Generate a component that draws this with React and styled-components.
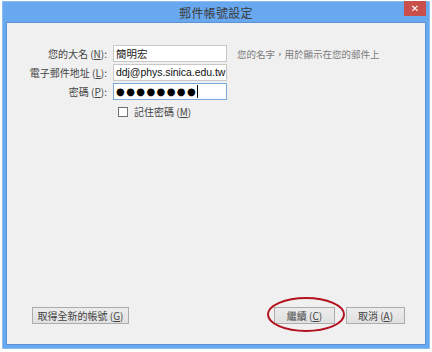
import React from "react";
import styled, { createGlobalStyle } from "styled-components";

const Global = createGlobalStyle`
  html, body {
    margin: 0;
    padding: 0;
    background: #ffffff;
  }
  body {
    font-family: "Noto Sans CJK TC", "Noto Sans", sans-serif;
  }
`;

const Page = styled.div`
  width: 432px;
  height: 352px;
  padding: 1px 2px 0 2px;
  box-sizing: border-box;
`;

const Window = styled.div`
  width: 428px;
  height: 348px;
  box-sizing: border-box;
  background: #68a8ef;
  border: 1px solid #8cbcf2;
  padding: 0 3px 3px 3px;
  display: flex;
  flex-direction: column;
`;

const TitleBar = styled.div`
  height: 20px;
  display: grid;
  grid-template-columns: 1fr auto 1fr;
  align-items: start;
`;

const Title = styled.div`
  grid-column: 2;
  font-size: 12px;
  line-height: 21px;
  color: #3a3a3a;
  letter-spacing: 0.3px;
`;

const Close = styled.div`
  grid-column: 3;
  justify-self: end;
  margin-top: -1px;
  width: 22px;
  height: 15px;
  background: #c9504a;
  color: #ffffff;
  font-family: "DejaVu Sans", sans-serif;
  font-size: 10px;
  font-weight: bold;
  line-height: 15px;
  text-align: center;
`;

const Client = styled.div`
  flex: 1;
  background: #f0f0f0;
  border: 1px solid #5c93d6;
  padding: 22px 0 20px 0;
  display: flex;
  flex-direction: column;
  justify-content: space-between;
`;

const Form = styled.div`
  display: grid;
  grid-template-columns: 100px 114px auto;
  column-gap: 6px;
  row-gap: 2px;
  align-items: center;
`;

const Label = styled.div`
  font-size: 10px;
  color: #444444;
  text-align: right;
  white-space: nowrap;
`;

const Key = styled.span`
  text-decoration: underline;
  text-underline-offset: 1px;
`;

const Field = styled.div`
  height: 17px;
  box-sizing: border-box;
  background: #ffffff;
  border: 1px solid ${(p) => (p.focused ? "#7aa7d8" : "#c8c8c8")};
  padding: 0 2px;
  font-size: 10.5px;
  line-height: 15px;
  color: #222222;
  white-space: nowrap;
  overflow: hidden;
  display: flex;
  align-items: center;
`;

const Latin = styled.span`
  font-family: "Liberation Sans", sans-serif;
  font-size: 10.5px;
  letter-spacing: -0.05px;
  color: #111111;
`;

const Dots = styled.span`
  font-family: "DejaVu Sans", sans-serif;
  font-size: 10px;
  letter-spacing: 1.4px;
  color: #000000;
`;

const Caret = styled.span`
  display: inline-block;
  width: 1px;
  height: 13px;
  background: #000000;
`;

const Hint = styled.div`
  font-size: 9.5px;
  color: #7a7a7a;
  white-space: nowrap;
  padding-left: 4px;
`;

const CheckRow = styled.label`
  grid-column: 2 / 4;
  display: flex;
  align-items: center;
  gap: 6px;
  padding-left: 5px;
  margin-top: 2px;
  font-size: 10px;
  color: #444444;
`;

const Box = styled.span`
  width: 10px;
  height: 10px;
  box-sizing: border-box;
  border: 1px solid #707070;
  background: #ffffff;
`;

const Footer = styled.div`
  display: flex;
  align-items: center;
  padding: 0 20px 0 25px;
`;

const Button = styled.div`
  position: relative;
  width: ${(p) => p.w}px;
  height: 17px;
  box-sizing: border-box;
  background: linear-gradient(#ececec, #e0e0e0);
  border: 1px solid #acacac;
  font-size: 10px;
  line-height: 15px;
  color: #444444;
  text-align: center;
  white-space: nowrap;
  margin-left: ${(p) => p.gap || 0}px;
`;

const Spacer = styled.div`
  flex: 1;
`;

const Mark = styled.svg`
  position: absolute;
  left: -8px;
  top: -12px;
  pointer-events: none;
`;

export default function App() {
  return (
    <Page>
      <Global />
      <Window>
        <TitleBar>
          <Title>郵件帳號設定</Title>
          <Close>✕</Close>
        </TitleBar>
        <Client>
          <Form>
            <Label>
              您的大名 (<Key>N</Key>):
            </Label>
            <Field>簡明宏</Field>
            <Hint>您的名字，用於顯示在您的郵件上</Hint>

            <Label>
              電子郵件地址 (<Key>L</Key>):
            </Label>
            <Field>
              <Latin>ddj@phys.sinica.edu.tw</Latin>
            </Field>
            <div />

            <Label>
              密碼 (<Key>P</Key>):
            </Label>
            <Field focused>
              <Dots>●●●●●●●●</Dots>
              <Caret />
            </Field>
            <div />

            <div />
            <CheckRow>
              <Box />
              <span>
                記住密碼 (<Key>M</Key>)
              </span>
            </CheckRow>
          </Form>
          <Footer>
            <Button w={97}>
              取得全新的帳號 (<Key>G</Key>)
            </Button>
            <Spacer />
            <Button w={61}>
              繼續 (<Key>C</Key>)
              <Mark width="80" height="37" viewBox="0 0 80 37">
                <ellipse
                  cx="39"
                  cy="18.5"
                  rx="38"
                  ry="16.5"
                  fill="none"
                  stroke="#b3121f"
                  strokeWidth="2"
                />
              </Mark>
            </Button>
            <Button w={59} gap={11}>
              取消 (<Key>A</Key>)
            </Button>
          </Footer>
        </Client>
      </Window>
    </Page>
  );
}
